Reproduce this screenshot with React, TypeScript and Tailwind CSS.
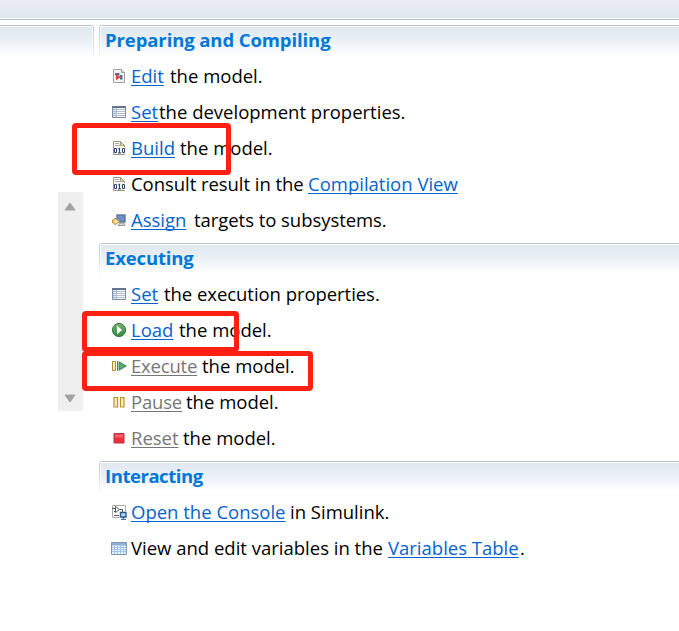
import type { ReactNode } from 'react';

const Svg = ({ children }: { children: ReactNode }) => (
  <svg width="16" height="16" viewBox="0 0 16 16" className="shrink-0">{children}</svg>
);

const EditIcon = () => (
  <Svg>
    <path d="M2.5 1.5h8l3 3v10h-11z" fill="#f1f3f5" stroke="#a3a29c" />
    <path d="M10.5 1.5v3h3" fill="#ddd" stroke="#999" />
    <path d="M4 5h4.5v2.5H4z" fill="#66717c" />
    <path d="M9 7h2.5v4.5H9z" fill="#53709a" />
    <path d="M5 6.5l5 2.5-5 3.2z" fill="#d84a35" />
  </Svg>
);

const ListIcon = () => (
  <Svg>
    <path d="M1.5 2.5h13v11h-13z" fill="#f7fafc" stroke="#7d8da5" />
    <path d="M1 2h14v2H1z" fill="#63748f" />
    <path d="M2 4h3v9H2z" fill="#d5e0ee" />
    <path d="M2 5.5h12M2 7.5h12M2 9.5h12M2 11.5h12" stroke="#a3b3c8" strokeWidth=".8" />
    <path d="M5.5 4v9" stroke="#a9b7ca" strokeWidth=".8" />
  </Svg>
);

const BinaryIcon = () => (
  <Svg>
    <path d="M2.5 1.5h7l4 4v9h-11z" fill="#fbf8ea" stroke="#a49a7c" />
    <path d="M9.5 1.5v4h4z" fill="#e6d7a4" stroke="#a49a7c" />
    <path d="M4 3.5h4M4 5.5h5" stroke="#9bb1d2" />
    <path d="M3 7h11v7H3z" fill="#eef1f6" />
    <path d="M3.5 8.5h2v4h-2zM8.5 8v5M7.2 9l1.3-.8M7 12.9h3M11.5 8.5h2v4h-2z" fill="none" stroke="#31466f" />
  </Svg>
);

const AssignIcon = () => (
  <Svg>
    <path d="M5.5 2.5h9v8h-9z" fill="#5779b5" stroke="#9ba1ab" />
    <path d="M7 4h6v5H7z" fill="#6e8fc6" />
    <path d="M7 13.5h7l-1-2.5H9z" fill="#d4d7dc" stroke="#868c96" strokeWidth=".8" />
    <path d="M1.5 8h2.5v-2l4.5 3.5-4.5 3.5v-2h-2.5z" fill="#f9e7a8" stroke="#c08f2e" />
  </Svg>
);

const LoadIcon = () => (
  <Svg>
    <defs>
      <linearGradient id="load" x2="0" y2="1">
        <stop stopColor="#79b56d" />
        <stop offset="1" stopColor="#2c873a" />
      </linearGradient>
    </defs>
    <circle cx="8" cy="8" r="6.6" fill="url(#load)" stroke="#397c46" />
    <path d="M6 3.5L11 8 6 12.5z" fill="#fff" />
  </Svg>
);

const ExecuteIcon = () => (
  <Svg>
    <path d="M1.5 3.5h3v9h-3z" fill="#fbefb1" stroke="#b08d28" />
    <path d="M8 3.8l7.2 4.2L8 12.2z" fill="#5fac73" stroke="#368451" />
    <path d="M6.5 3v10" stroke="#4b8c5c" />
  </Svg>
);

const PauseIcon = () => (
  <Svg>
    <path d="M3 3.5h3.5v9.5H3zM9.5 3.5H13v9.5H9.5z" fill="#fff2b4" stroke="#b9932a" strokeWidth="1.2" />
  </Svg>
);

const StopIcon = () => (
  <Svg>
    <path d="M3 3.5h10v9.5H3z" fill="#e7303c" stroke="#bf3340" />
    <path d="M4 4.5h8v3H4z" fill="#ef6169" />
  </Svg>
);

const ConsoleIcon = () => (
  <Svg>
    <path d="M1.5 13.5v-12h13v6" fill="none" stroke="#aaa" />
    <path d="M1.5 13.5h7" stroke="#aaa" />
    <path d="M1 4.5h3M3 7.5h1M4.5 2.5L8.5 5.5 4.5 8.5zM8.5 5.5h3V8M3 11.5h5" fill="none" stroke="#555b63" />
    <path d="M9.5 8.5h5.5v4.5H9.5z" fill="#bfd8ef" stroke="#2c568e" strokeWidth="1.4" />
    <path d="M12.2 13v2M10 15.3h5" stroke="#2c568e" />
  </Svg>
);

const TableIcon = () => (
  <Svg>
    <path d="M.5 2.5h15v12H.5z" fill="#e6f2fb" stroke="#7997bd" />
    <path d="M1 3h14v2.5H1z" fill="#8faed1" />
    <path d="M1 7.5h14M1 9.5h14M1 11.5h14M3.5 6v8M6.5 6v8M9.5 6v8M12.5 6v8" stroke="#a9c6e4" />
  </Svg>
);

const link = 'text-[#0563ce] underline decoration-1 underline-offset-2 [text-decoration-skip-ink:none]';
const off = 'text-[#777] underline decoration-1 underline-offset-2 [text-decoration-skip-ink:none]';

type Part = { text: string; box: string; style?: string };

const Row = ({ icon, parts }: { icon: ReactNode; parts: Part[] }) => (
  <div className="flex h-9 items-center pl-3">
    {icon}
    <div className="ml-1 flex whitespace-pre">
      {parts.map((p) => (
        <span key={p.text} className={`block ${p.box}`}>
          <span className={p.style ?? 'text-black'}>{p.text}</span>
        </span>
      ))}
    </div>
  </div>
);

const Section = ({ title, tracking, children }: { title: string; tracking: string; children: ReactNode }) => (
  <section className="relative mb-[5px]">
    <div className="h-[33px] rounded-tl-[3px] border-t border-[#b9c4d8] bg-[linear-gradient(#fff_0_1px,#e0e8f0_1px,#e8eef4_12px,#fff_30px)]">
      <h2 className={`pl-[6px] text-[18.5px] leading-[28px] font-bold text-[#0078d7] ${tracking}`}>{title}</h2>
    </div>
    <div className="absolute top-[2px] left-0 h-[32px] w-[2px] bg-[linear-gradient(90deg,#c0cbdc_50%,#fff_50%)] [mask-image:linear-gradient(#000,transparent)]" />
    {children}
  </section>
);

export default function App() {
  return (
    <main className="relative h-[631px] w-[679px] overflow-hidden bg-white font-['Open_Sans','Noto_Sans',sans-serif] text-[18.5px] leading-7">
      <header className="h-5 border-b border-[#b9c4d8] bg-[linear-gradient(#eceef4,#e5eaf3_10px,#e0e8f0_18px,#fff_18px)]" />
      <div className="flex pt-[5px]">
        <aside className="w-[99px] shrink-0">
          <div className="relative h-[33px] w-[94px] rounded-tr-[3px] border-t border-[#b9c4d8] bg-[linear-gradient(#fff_0_1px,#e0e8f0_1px,#e8eef4_12px,#fff_30px)]">
            <div className="absolute top-[1px] right-0 h-[32px] w-[2px] bg-[linear-gradient(90deg,#fff_50%,#c0cbdc_50%)] [mask-image:linear-gradient(#000,transparent)]" />
          </div>
          <div className="mt-[134px] ml-[58px] flex h-[219px] w-[25px] flex-col items-center justify-between bg-[#efefef] pt-[10px] pb-[8px]">
            <svg width="13" height="9"><path d="M6 1L11 8H1z" fill="#a3a3a3" stroke="#a3a3a3" strokeLinejoin="round" /></svg>
            <svg width="13" height="9"><path d="M1 1h10L6 8z" fill="#a3a3a3" stroke="#a3a3a3" strokeLinejoin="round" /></svg>
          </div>
        </aside>
        <div className="grow">
          <Section title="Preparing and Compiling" tracking="tracking-[-0.1px]">
            <Row icon={<EditIcon />} parts={[{ text: 'Edit', box: 'w-[39px]', style: link }, { text: 'the model.', box: '' }]} />
            <Row icon={<ListIcon />} parts={[{ text: 'Set', box: 'w-[28px]', style: link }, { text: 'the development properties.', box: '' }]} />
            <Row icon={<BinaryIcon />} parts={[{ text: 'Build', box: 'w-[49px]', style: link }, { text: 'the model.', box: '' }]} />
            <Row icon={<BinaryIcon />} parts={[{ text: 'Consult result in the', box: 'w-[177px] tracking-[-0.05px]' }, { text: 'Compilation View', box: '', style: link }]} />
            <Row icon={<AssignIcon />} parts={[{ text: 'Assign', box: 'w-[63px]', style: link }, { text: 'targets to subsystems.', box: 'tracking-[-0.05px]' }]} />
          </Section>
          <Section title="Executing" tracking="tracking-[-0.15px]">
            <Row icon={<ListIcon />} parts={[{ text: 'Set', box: 'w-[33px]', style: link }, { text: 'the execution properties.', box: 'tracking-[-0.05px]' }]} />
            <Row icon={<LoadIcon />} parts={[{ text: 'Load', box: 'w-[48px]', style: link }, { text: 'the model.', box: '' }]} />
            <Row icon={<ExecuteIcon />} parts={[{ text: 'Execute', box: 'w-[71px] tracking-[-0.2px]', style: off }, { text: 'the model.', box: '' }]} />
            <Row icon={<PauseIcon />} parts={[{ text: 'Pause', box: 'w-[55px] tracking-[-0.2px]', style: off }, { text: 'the model.', box: '' }]} />
            <Row icon={<StopIcon />} parts={[{ text: 'Reset', box: 'w-[52px]', style: off }, { text: 'the model.', box: '' }]} />
          </Section>
          <Section title="Interacting" tracking="tracking-[-0.45px]">
            <Row icon={<ConsoleIcon />} parts={[{ text: 'Open the Console', box: 'w-[159px]', style: link }, { text: 'in Simulink.', box: '' }]} />
            <Row icon={<TableIcon />} parts={[{ text: 'View and edit variables in the', box: 'w-[257px]' }, { text: 'Variables Table', box: 'w-[132px]', style: link }, { text: '.', box: '' }]} />
          </Section>
        </div>
      </div>
      <div className="absolute top-[123px] left-[72px] h-[52px] w-[159px] rounded-[4px] border-[5px] border-[#ff2014]" />
      <div className="absolute top-[311px] left-[82px] h-[41px] w-[157px] rounded-[4px] border-[5px] border-[#ff2014]" />
      <div className="absolute top-[351px] left-[82px] h-[40px] w-[231px] rounded-[4px] border-[5px] border-[#ff2014]" />
    </main>
  );
}
